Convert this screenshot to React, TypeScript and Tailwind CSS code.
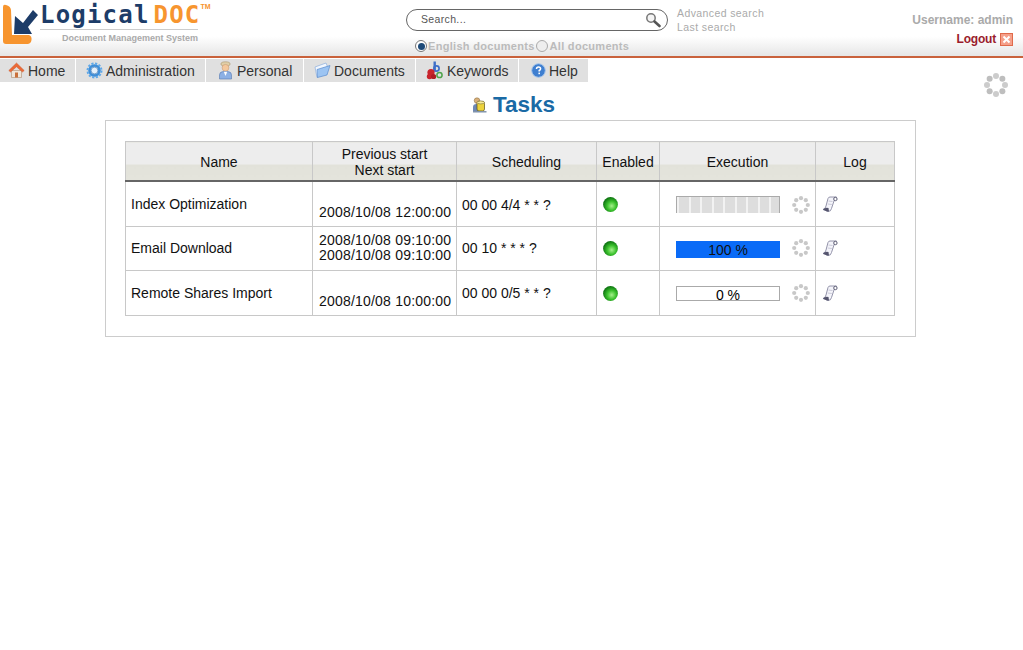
import React from 'react';

function HomeIcon() {
  return (
    <svg width="17" height="17" viewBox="0 0 17 17">
      <path d="M3.5 8.5 V15.5 H13.5 V8.5 Z" fill="#efe6da" stroke="#b89a80" strokeWidth="0.7" />
      <rect x="7" y="10.5" width="3" height="5" fill="#c9703a" />
      <path d="M8.5 1 L0.8 8.5 L2.5 10 L8.5 4.8 L14.5 10 L16.2 8.5 Z" fill="#ec6a38" stroke="#c85a2e" strokeWidth="0.5" />
    </svg>
  );
}

function GearIcon() {
  return (
    <svg width="17" height="17" viewBox="0 0 17 17">
      <circle cx="8.5" cy="8.5" r="5" fill="none" stroke="#3f8ed8" strokeWidth="2.6" />
      <circle cx="8.5" cy="8.5" r="7" fill="none" stroke="#5fa8e8" strokeWidth="2" strokeDasharray="2.2 1.5" />
      <circle cx="8.5" cy="8.5" r="3.4" fill="#e4f0fb" stroke="#2a6cb0" strokeWidth="0.6" />
    </svg>
  );
}

function PersonIcon() {
  return (
    <svg width="17" height="19" viewBox="0 0 17 19">
      <ellipse cx="8.5" cy="3" rx="4.6" ry="2.2" fill="#e0cfa8" stroke="#a8946c" strokeWidth="0.6" />
      <circle cx="8.5" cy="6.8" r="3.4" fill="#f4c89c" stroke="#c0906a" strokeWidth="0.5" />
      <path d="M2.5 18 V14 Q2.5 10.8 6 10.6 H11 Q14.5 10.8 14.5 14 V18 Z" fill="#8cb0e4" stroke="#5878b0" strokeWidth="0.6" />
      <path d="M6.8 10.8 L8.5 15 L10.2 10.8 Z" fill="#fff" />
    </svg>
  );
}

function FolderIcon() {
  return (
    <svg width="17" height="17" viewBox="0 0 17 17">
      <path d="M1 5 L12 1 L14 6 L3 15.5 Z" fill="#f2f7fe" stroke="#7da4d8" strokeWidth="0.6" />
      <path d="M3 7.5 L16 3.5 L13 13 L3.5 15.5 Z" fill="#9cc4f2" stroke="#4a80c8" strokeWidth="0.6" />
    </svg>
  );
}

function KeywordsIcon() {
  return (
    <svg width="18" height="19" viewBox="0 0 18 19">
      <rect x="7.5" y="0.5" width="2.4" height="10" fill="#3f6fc8" />
      <circle cx="10.5" cy="7.5" r="2.6" fill="none" stroke="#3f6fc8" strokeWidth="1.7" />
      <circle cx="5" cy="11.5" r="3.6" fill="#c8242c" />
      <circle cx="3.6" cy="15.5" r="2.8" fill="#c8242c" />
      <circle cx="7.6" cy="15.5" r="2.6" fill="#b01c24" />
      <circle cx="13.5" cy="14" r="2.6" fill="none" stroke="#4ea34a" strokeWidth="1.5" />
    </svg>
  );
}

function HelpIcon() {
  return (
    <svg width="15" height="15" viewBox="0 0 15 15">
      <circle cx="7.5" cy="7.5" r="6.8" fill="#3f7fd0" stroke="#a4c4ea" strokeWidth="1" />
      <path d="M5.5 6 Q5.5 4 7.5 4 Q9.6 4 9.6 5.8 Q9.6 6.9 8.2 7.5 V8.6" fill="none" stroke="#fff" strokeWidth="1.5" />
      <rect x="7.4" y="9.6" width="1.6" height="1.6" fill="#fff" />
    </svg>
  );
}

function TaskIcon() {
  return (
    <svg width="15" height="16" viewBox="0 0 15 16">
      <circle cx="5" cy="3.6" r="2.8" fill="#d8b07a" stroke="#86683c" strokeWidth="0.5" />
      <path d="M1 14.5 V10 Q1 7 4.5 7 H7 V14.5 Z" fill="#6f88b4" />
      <rect x="5" y="4.5" width="7.5" height="9.5" rx="2" fill="#ecd23c" stroke="#5c5218" strokeWidth="0.7" />
      <ellipse cx="8.7" cy="5.4" rx="3.7" ry="1.5" fill="#f8ec9a" stroke="#5c5218" strokeWidth="0.5" />
      <path d="M1 14.8 H14.5" stroke="#7a8ea8" strokeWidth="1.4" />
    </svg>
  );
}

function LedIcon() {
  return (
    <svg width="15" height="15" viewBox="0 0 15 15" className="ml-[1px]">
      <defs>
        <radialGradient id="led" cx="0.58" cy="0.6" r="0.6">
          <stop offset="0" stopColor="#a6f08c" />
          <stop offset="0.5" stopColor="#3cc22e" />
          <stop offset="1" stopColor="#0c7210" />
        </radialGradient>
      </defs>
      <circle cx="7.5" cy="7.5" r="7.4" fill="url(#led)" />
    </svg>
  );
}

function LogIcon() {
  return (
    <svg width="16" height="17" viewBox="0 0 16 17" className="ml-[1px]">
      <path d="M6 2.5 Q6.5 1 8 1 L14.5 1 Q12.6 2.5 12 5 L9.5 12.5 Q9 15.5 6 15.5 L1 13.5 Q3.5 12.8 4 10 Z" fill="#f4f4fa" stroke="#8888a0" strokeWidth="0.9" />
      <circle cx="13.4" cy="3" r="1.7" fill="#fff" stroke="#50506a" strokeWidth="0.9" />
      <path d="M1 13.5 Q3.5 10.8 6.5 12 L7 15.5 L5 15.5 Z" fill="#55556e" />
      <path d="M6.5 5 L10.5 5.5 M5.8 8 L9.8 8.5" stroke="#b8b8c8" strokeWidth="0.7" />
    </svg>
  );
}

function Ring() {
  return (
    <svg width="18" height="18" viewBox="0 0 18 18">
      {Array.from({ length: 8 }).map((_, i) => {
        const a = (i / 8) * Math.PI * 2;
        return <circle key={i} cx={9 + Math.cos(a) * 6.8} cy={9 + Math.sin(a) * 6.8} r={2.1} fill="#c8c8c8" />;
      })}
    </svg>
  );
}

function LogoMark() {
  return (
    <svg width="38" height="44" viewBox="0 0 38 44">
      <path d="M2 6 Q2 3 5 4 Q9.5 5 10 9 L11 34 L28 34 Q31 35 30.5 39 Q30 42.5 27 43 L5 43 Q2 43 2 40 Z" fill="#f7952f" />
      <path d="M14 15 L22 22 L32 9 L37 14 L27 26 L31 33 L13 33 Z" fill="#1d3c68" />
    </svg>
  );
}

const tabs = [
  { label: 'Home', icon: <HomeIcon />, w: 'w-[75px] pl-[8px] gap-[3px]' },
  { label: 'Administration', icon: <GearIcon />, w: 'w-[129px] pl-[10px] gap-[3px]' },
  { label: 'Personal', icon: <PersonIcon />, w: 'w-[97px] pl-[11px] gap-[3px]' },
  { label: 'Documents', icon: <FolderIcon />, w: 'w-[111px] pl-[10px] gap-[3px]' },
  { label: 'Keywords', icon: <KeywordsIcon />, w: 'w-[102px] pl-[10px] gap-[3px]' },
  { label: 'Help', icon: <HelpIcon />, w: 'w-[69px] pl-[12px] gap-[3px]' },
];

const rows = [
  { name: 'Index Optimization', prev: '', next: '2008/10/08 12:00:00', cron: '00 00 4/4 * * ?', progress: 'idle' },
  { name: 'Email Download', prev: '2008/10/08 09:10:00', next: '2008/10/08 09:10:00', cron: '00 10 * * * ?', progress: 'full' },
  { name: 'Remote Shares Import', prev: '', next: '2008/10/08 10:00:00', cron: '00 00 0/5 * * ?', progress: 'zero' },
];

function Progress({ kind }: { kind: string }) {
  if (kind === 'idle') {
    return (
      <div className="w-[104px] h-[17px] border border-[#aaaaaa] border-b-0 flex gap-[2px] px-[2px] bg-[#f2f2f2] overflow-hidden">
        {Array.from({ length: 9 }).map((_, i) => (
          <div key={i} className="w-[9.5px] bg-[#dddddd] shrink-0" />
        ))}
      </div>
    );
  }
  if (kind === 'full') {
    return (
      <div className="mt-[4px] w-[104px] h-[17px] bg-[#0a6bf7] text-center text-[14px] leading-[18px] text-[#111]">100 %</div>
    );
  }
  return (
    <div className="w-[104px] h-[15px] border border-[#aaaaaa] text-center text-[14px] leading-[16px] text-black">0 %</div>
  );
}

const thClass = 'border border-[#c8c8c8] border-b-2 border-b-[#666666] font-normal text-center text-[14px] leading-[16px] p-0 pt-[2px] bg-[linear-gradient(#ededed_0,#ededed_57%,#e2e2da_57%,#e4e4dc_100%)]';
const tdClass = 'border border-[#c8c8c8] text-[14px] leading-[16px] p-0 px-[5px] align-middle';

export default function App() {
  return (
    <div className="relative w-full min-h-screen bg-white text-[#111] font-['Liberation_Sans',Arial,sans-serif]">
      <header className="h-[58px] flex border-b-2 border-[#c9623c] bg-[linear-gradient(#ffffff_0,#ffffff_65%,#e6e6e6_100%)]">
        <div className="w-[406px] flex pl-[1px] pt-[1px]">
          <LogoMark />
          <div className="pt-[1px] pl-[1px]">
            <div className="relative flex font-['DejaVu_Sans_Mono',monospace] font-bold text-[24px] leading-[26px] tracking-[1.2px]">
              <span className="text-[#1d3c68]">Logical</span>
              <span className="ml-[4px] text-[#f7952f]">DOC</span>
              <span className="text-[7px] leading-[10px] tracking-normal text-[#f7952f] font-['Liberation_Sans',sans-serif]">TM</span>
            </div>
            <div className="mt-[1px] w-[158px] border-t border-[#cccccc] pt-[2px] text-right text-[9px] leading-[12px] font-bold text-[#aaaaaa]">
              Document Management System
            </div>
          </div>
        </div>
        <div className="w-[271px] pt-[9px]">
          <div className="w-[262px] h-[22px] border border-[#666666] rounded-full flex items-center justify-between pl-[14px] pr-[6px]">
            <span className="text-[10.5px] tracking-[0.35px] text-[#555555]">Search...</span>
            <svg width="16" height="16" viewBox="0 0 16 16">
              <circle cx="6" cy="6" r="4.2" fill="#f4f4f4" stroke="#777777" strokeWidth="1.5" />
              <path d="M9.5 9.5 L14.5 14" stroke="#555555" strokeWidth="2.6" strokeLinecap="round" />
            </svg>
          </div>
          <div className="mt-[9px] ml-[9px] flex items-center text-[11px] leading-[12px] font-bold tracking-[0.3px] text-[#bbbbbb]">
            <span className="w-[12px] h-[12px] rounded-full border border-[#777777] bg-white flex items-center justify-center shrink-0">
              <span className="w-[7px] h-[7px] rounded-full bg-[#1d4a78]" />
            </span>
            <span className="ml-[1px]">English documents</span>
            <span className="w-[12px] h-[12px] rounded-full border border-[#aaaaaa] bg-[#eeeeee] ml-[1px] shrink-0" />
            <span className="ml-[2px]">All documents</span>
          </div>
        </div>
        <div className="pt-[6px] text-[10.5px] leading-[14px] tracking-[0.4px] text-[#aaaaaa]">
          <div>Advanced search</div>
          <div>Last search</div>
        </div>
        <div className="ml-auto pr-[10px] pt-[14px] flex flex-col items-end text-[12px] font-bold">
          <div className="leading-[13px] text-[#aaaaaa]">Username: admin</div>
          <div className="mt-[6px] flex items-center gap-[4px] leading-[13px] tracking-[-0.2px] text-[#9a1c2c]">
            Logout
            <svg width="13" height="13" viewBox="0 0 13 13">
              <rect x="0.5" y="0.5" width="12" height="12" fill="#f5a08a" stroke="#e06a4a" />
              <path d="M3.5 3.5 L9.5 9.5 M9.5 3.5 L3.5 9.5" stroke="#fff" strokeWidth="2" />
            </svg>
          </div>
        </div>
      </header>

      <nav className="mt-[1px] flex gap-[1px] h-[23px]">
        {tabs.map(t => (
          <div key={t.label} className={`${t.w} h-full bg-[#e0e0e0] flex items-center text-[14px] text-[#333333]`}>
            {t.icon}
            <span className="pt-[1px]">{t.label}</span>
          </div>
        ))}
      </nav>

      {/* busy indicator in the corner */}
      <div className="absolute top-[73px] right-[15px]">
        <svg width="24" height="24" viewBox="0 0 24 24">
          {Array.from({ length: 8 }).map((_, i) => {
            const a = (i / 8) * Math.PI * 2;
            return <circle key={i} cx={12 + Math.cos(a) * 9} cy={12 + Math.sin(a) * 9} r={3} fill={i % 2 ? '#bebebe' : '#cccccc'} />;
          })}
        </svg>
      </div>

      <main className="flex flex-col items-start">
        <h1 className="mt-[9px] mb-[1px] ml-[472px] h-[28px] flex items-center gap-[6px] text-[22.5px] font-bold text-[#1a6aa5]">
          <TaskIcon />
          Tasks
        </h1>
        <div className="ml-[105px] w-[811px] h-[217px] border border-[#cccccc] pt-[20px] pl-[19px]">
          <table className="table-fixed border-collapse w-[769px]">
            <colgroup>
              <col className="w-[187px]" />
              <col className="w-[144px]" />
              <col className="w-[140px]" />
              <col className="w-[63px]" />
              <col className="w-[156px]" />
              <col className="w-[79px]" />
            </colgroup>
            <thead>
              <tr className="h-[39px]">
                <th className={thClass}>Name</th>
                <th className={thClass}>Previous start<br />Next start</th>
                <th className={thClass}>Scheduling</th>
                <th className={thClass}>Enabled</th>
                <th className={thClass}>Execution</th>
                <th className={thClass}>Log</th>
              </tr>
            </thead>
            <tbody>
              {rows.map((r, i) => (
                <tr key={r.name} className={i === 0 ? 'h-[46px]' : i === 1 ? 'h-[44px]' : 'h-[45px]'}>
                  <td className={`${tdClass} ${i === 1 ? 'pb-[2px]' : ''}`}>{r.name}</td>
                  <td className={`${tdClass} pl-[6px] whitespace-nowrap tracking-[0.2px] ${i === 1 ? 'pb-[2px]' : ''}`}>
                    <div className={i === 1 ? 'h-[15px] leading-[15px]' : 'h-[16px]'}>{r.prev}</div>
                    <div className={i === 1 ? 'h-[15px] leading-[15px]' : 'h-[16px]'}>{r.next}</div>
                  </td>
                  <td className={`${tdClass} ${i === 1 ? 'pb-[2px]' : i === 0 ? 'pt-[2px]' : ''}`}>{r.cron}</td>
                  <td className={`${tdClass} ${i === 0 ? 'pt-[2px]' : ''}`}><LedIcon /></td>
                  <td className={`${tdClass} pl-[16px] ${i === 1 ? 'pb-[2px]' : i === 0 ? 'pt-[2px]' : ''}`}>
                    <div className="flex items-center gap-[12px]">
                      <Progress kind={r.progress} />
                      <Ring />
                    </div>
                  </td>
                  <td className={`${tdClass} ${i === 0 ? 'pt-[2px]' : ''}`}><LogIcon /></td>
                </tr>
              ))}
            </tbody>
          </table>
        </div>
      </main>
    </div>
  );
}
